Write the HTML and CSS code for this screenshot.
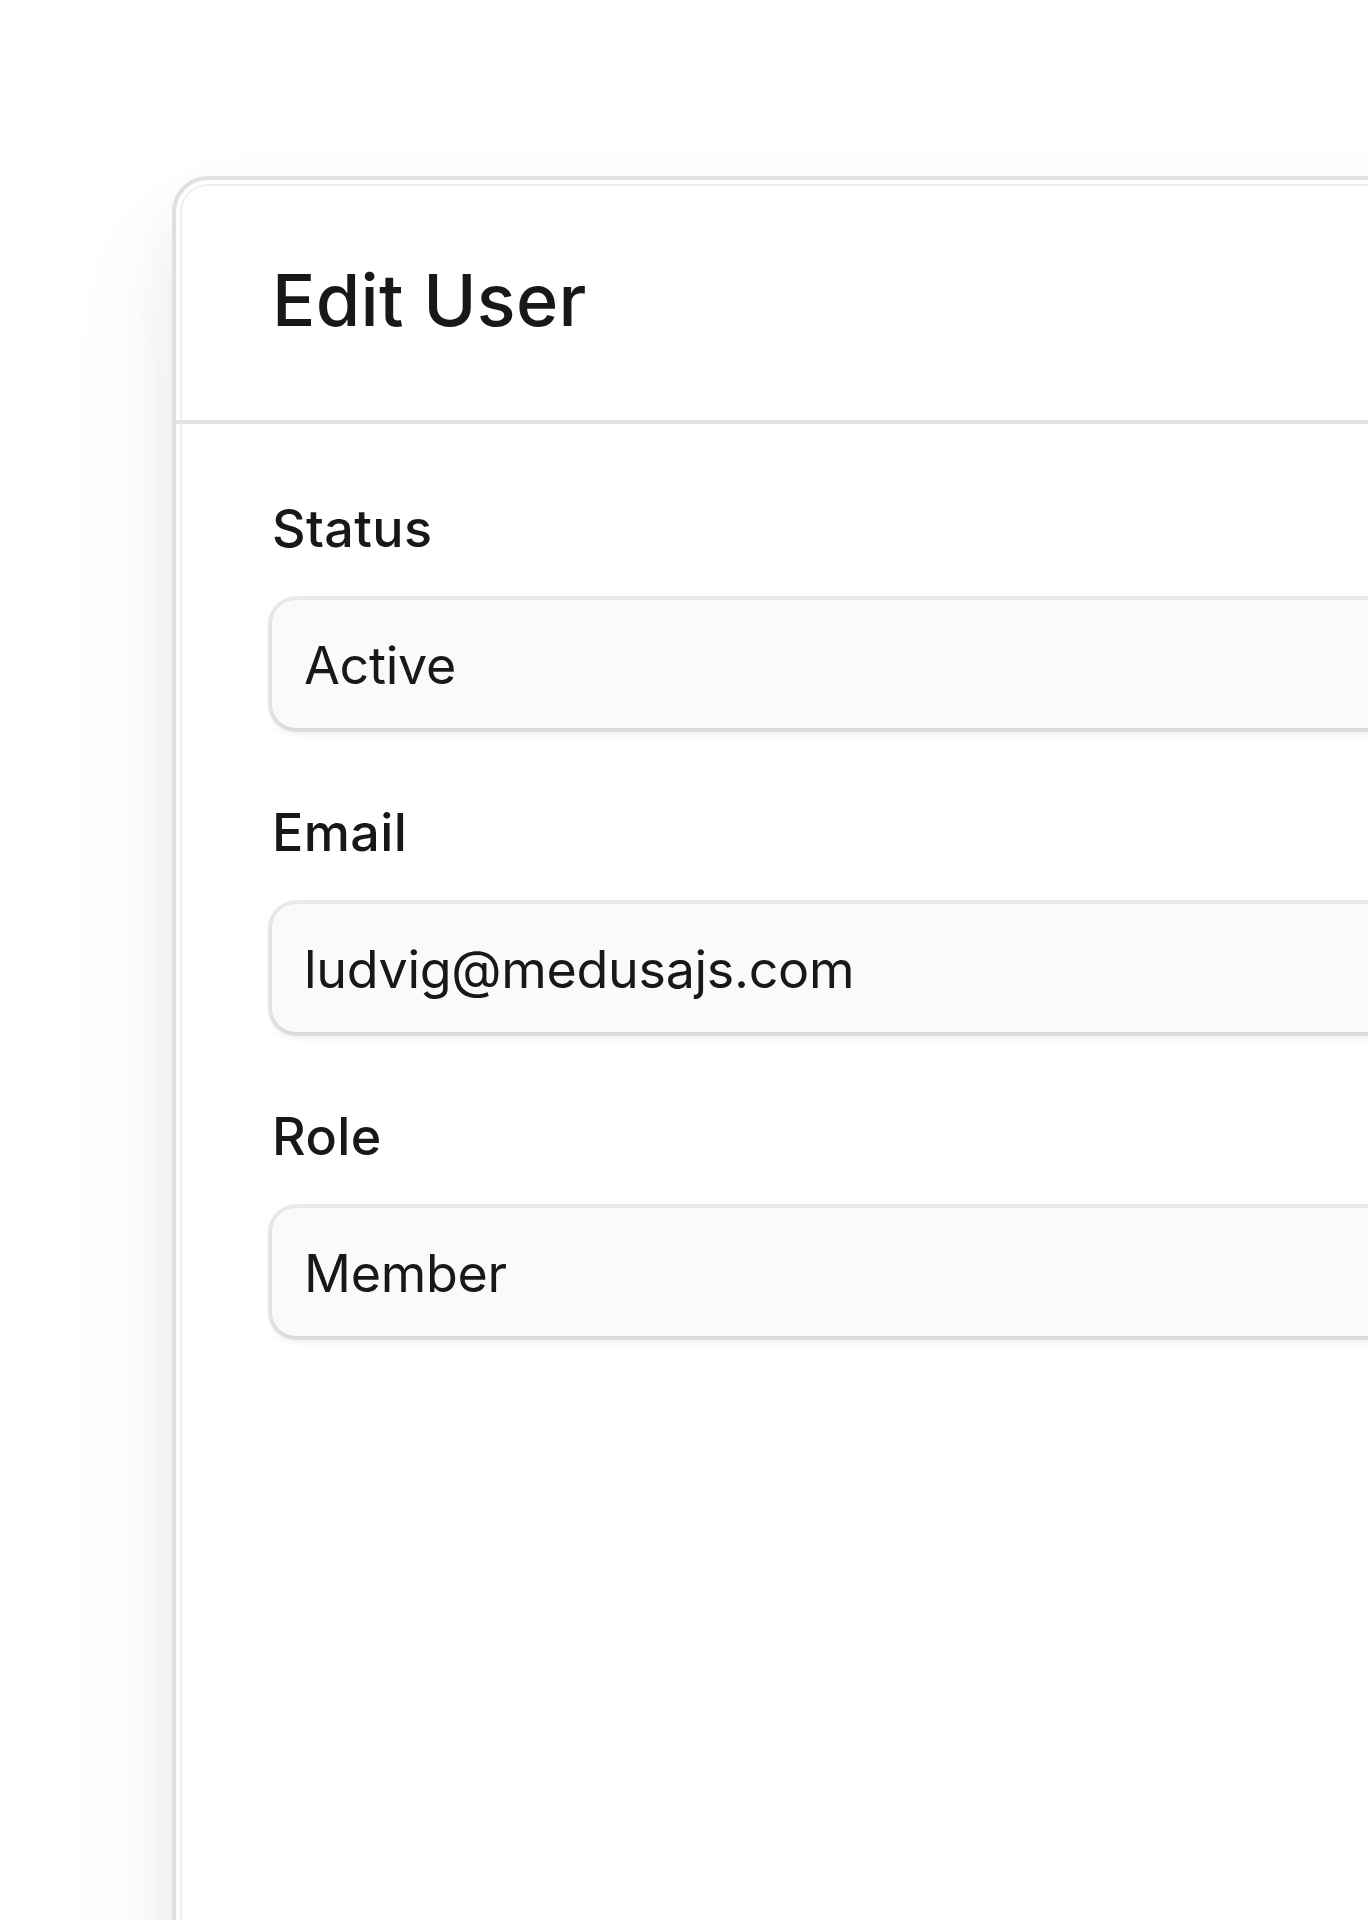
FILE: index.html
```html
<!DOCTYPE html>
<html lang="en">
<head>
<meta charset="utf-8">
<title>Edit User</title>
<link rel="stylesheet" href="styles.css">
</head>
<body>
  <div class="stage">
    <section class="panel">
      <header class="panel-header">
        <h1 class="panel-title">Edit User</h1>
      </header>
      <div class="panel-body">
        <div class="field">
          <label class="field-label">Status</label>
          <div class="field-input">Active</div>
        </div>
        <div class="field">
          <label class="field-label">Email</label>
          <div class="field-input">ludvig@medusajs.com</div>
        </div>
        <div class="field">
          <label class="field-label">Role</label>
          <div class="field-input">Member</div>
        </div>
      </div>
    </section>
  </div>
</body>
</html>
```

FILE: styles.css
```css
html, body {
  margin: 0;
  padding: 0;
  background: #ffffff;
}

body {
  width: 1368px;
  height: 1920px;
  overflow: hidden;
  font-family: "Inter", "Noto Sans", sans-serif;
  color: #18181b;
}

.stage {
  padding-top: 176px;
  padding-left: 172px;
}

.panel {
  width: 1500px;
  height: 1900px;
  box-sizing: border-box;
  background: #ffffff;
  border: 4px solid #e0e0e2;
  border-radius: 36px;
  box-shadow:
    inset 0 0 0 4px #ffffff,
    inset 0 0 0 6px #efeff0,
    0 32px 64px rgba(0, 0, 0, 0.05),
    0 64px 128px rgba(0, 0, 0, 0.06);
}

.panel-header {
  padding: 64px 96px;
  border-bottom: 4px solid #e4e4e7;
}

.panel-title {
  margin: 0;
  font-size: 72px;
  line-height: 112px;
  font-weight: 500;
  letter-spacing: 0.3px;
  color: #18181b;
}

.panel-body {
  padding: 64px 96px;
  display: flex;
  flex-direction: column;
  gap: 64px;
}

.field {
  display: flex;
  flex-direction: column;
  gap: 31px;
}

.field-label {
  padding-top: 1px;
  font-size: 52px;
  line-height: 80px;
  font-weight: 500;
  letter-spacing: 0.4px;
  color: #18181b;
}

.field-input {
  height: 128px;
  box-sizing: border-box;
  padding: 3px 32px 0;
  display: flex;
  align-items: center;
  background: #fafafa;
  border-radius: 24px;
  font-size: 52px;
  line-height: 80px;
  font-weight: 400;
  letter-spacing: -0.3px;
  color: #18181b;
  box-shadow:
    0 0 0 4px rgba(0, 0, 0, 0.08),
    0 4px 8px rgba(0, 0, 0, 0.10);
}
```
